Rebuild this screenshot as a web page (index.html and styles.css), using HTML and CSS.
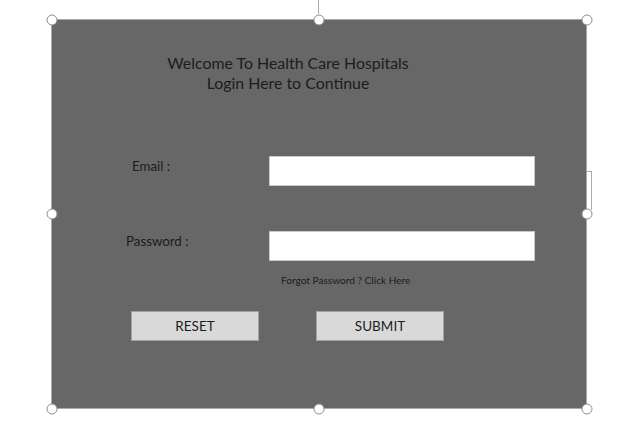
FILE: index.html
```html
<!DOCTYPE html>
<html>
<head>
<meta charset="utf-8">
<link rel="stylesheet" href="styles.css">
</head>
<body>
<div class="canvas">
  <div class="rotate-line"></div>
  <div class="layout-tab"></div>
  <div class="shape">
    <div class="title">
      <div>Welcome To Health Care Hospitals</div>
      <div>Login Here to Continue</div>
    </div>
    <div class="row row-email">
      <div class="label label-email">Email :</div>
      <div class="field"></div>
    </div>
    <div class="row row-pass">
      <div class="label label-pass">Password :</div>
      <div class="field"></div>
    </div>
    <div class="forgot">Forgot Password ? Click Here</div>
    <div class="buttons">
      <div class="btn">RESET</div>
      <div class="btn">SUBMIT</div>
    </div>
  </div>
  <span class="handle h-tl"></span>
  <span class="handle h-tm"></span>
  <span class="handle h-tr"></span>
  <span class="handle h-ml"></span>
  <span class="handle h-mr"></span>
  <span class="handle h-bl"></span>
  <span class="handle h-bm"></span>
  <span class="handle h-br"></span>
</div>
</body>
</html>
```
FILE: styles.css
```css
html, body {
  margin: 0;
  padding: 0;
  background: #ffffff;
}
body {
  width: 640px;
  height: 439px;
  overflow: hidden;
  font-family: Lato, "Liberation Sans", sans-serif;
  color: #1c1c1c;
}
.canvas {
  position: relative;
  width: 640px;
  height: 439px;
}
.shape {
  position: absolute;
  left: 51px;
  top: 19px;
  width: 534px;
  height: 388px;
  background: #676767;
  border: 1px solid #a9a9a9;
}
.title {
  width: 472px;
  margin-top: 33px;
  text-align: center;
  font-size: 15.9px;
  line-height: 20px;
}
.row {
  display: flex;
  align-items: flex-start;
}
.row-email { margin-top: 63px; }
.row-pass { margin-top: 45px; }
.label {
  width: 217px;
  box-sizing: border-box;
  font-size: 13.3px;
  line-height: 16px;
  padding-top: 2px;
}
.label-email { padding-left: 80px; }
.label-pass { padding-left: 74px; }
.field {
  width: 264px;
  height: 28px;
  background: #ffffff;
  border: 1px solid #c9c9c9;
}
.forgot {
  margin-top: 13px;
  margin-left: 229px;
  font-size: 10.1px;
  line-height: 12px;
}
.buttons {
  display: flex;
  gap: 57px;
  margin-top: 25px;
  margin-left: 79px;
}
.btn {
  width: 126px;
  height: 28px;
  background: #d9d9d9;
  border: 1px solid #a3a3a3;
  display: flex;
  align-items: center;
  justify-content: center;
  font-size: 13.5px;
  color: #1c1c1c;
}
.rotate-line {
  position: absolute;
  left: 318px;
  top: 0;
  width: 1px;
  height: 14px;
  background: #a9a9a9;
}
.layout-tab {
  position: absolute;
  left: 586px;
  top: 171px;
  width: 5px;
  height: 38px;
  border-top: 1px solid #a9a9a9;
  border-right: 1px solid #a9a9a9;
}
.handle {
  position: absolute;
  width: 9px;
  height: 9px;
  border-radius: 50%;
  background: #ffffff;
  border: 1px solid #8f8f8f;
  transform: translate(-50%, -50%);
}
.h-tl { left: 51.5px; top: 19.5px; }
.h-tm { left: 319px; top: 19.5px; }
.h-tr { left: 586.5px; top: 19.5px; }
.h-ml { left: 51.5px; top: 213.5px; }
.h-mr { left: 586.5px; top: 213.5px; }
.h-bl { left: 51.5px; top: 408.5px; }
.h-bm { left: 319px; top: 408.5px; }
.h-br { left: 586.5px; top: 408.5px; }
```
